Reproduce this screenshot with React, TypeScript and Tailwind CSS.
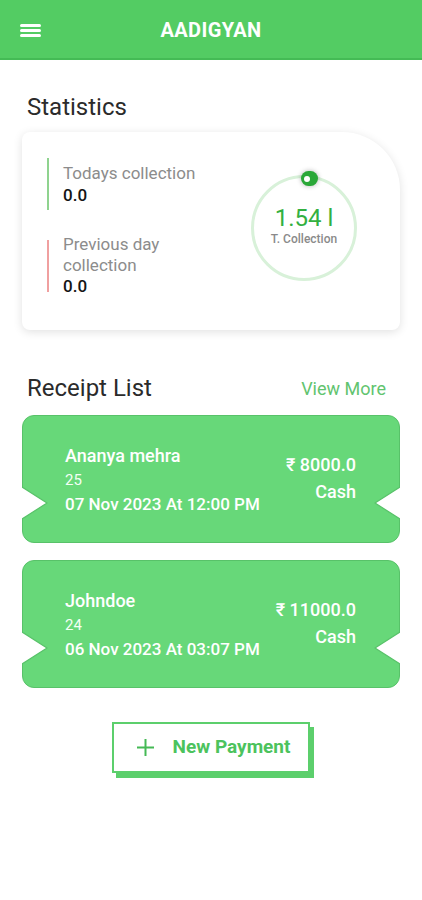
import React from "react";

interface Receipt {
  name: string;
  no: string;
  date: string;
  amount: string;
  mode: string;
}

const receipts: Receipt[] = [
  { name: "Ananya mehra", no: "25", date: "07 Nov 2023 At 12:00 PM", amount: "₹ 8000.0", mode: "Cash" },
  { name: "Johndoe", no: "24", date: "06 Nov 2023 At 03:07 PM", amount: "₹ 11000.0", mode: "Cash" },
];

const Notch = ({ side }: { side: "left" | "right" }) => (
  <svg
    width="26"
    height="32"
    viewBox="0 0 26 32"
    className={side === "left" ? "absolute left-[-1px] top-[71px]" : "absolute right-[-1px] top-[71px] rotate-180"}
  >
    <polygon points="0,0 25,16 0,32" fill="#ffffff" />
    <polyline points="0,0 25,16 0,32" fill="none" stroke="#58c269" strokeWidth="1.2" strokeLinejoin="round" />
  </svg>
);

const ReceiptCard = ({ r }: { r: Receipt }) => (
  <div className="relative h-[128px] rounded-[12px] bg-[#67d879] border border-[#58c269] flex items-center justify-between pl-[42px] pr-[43px]">
    <Notch side="left" />
    <Notch side="right" />
    <div className="text-white leading-[24px] mt-[2px]">
      <p className="text-[18px] font-medium">{r.name}</p>
      <p className="text-[15px] text-[#f4fff5]">{r.no}</p>
      <p className="text-[17px] font-medium">{r.date}</p>
    </div>
    <div className="text-white text-right leading-[27px] text-[18px] font-medium mt-[-2px]">
      <p>{r.amount}</p>
      <p>{r.mode}</p>
    </div>
  </div>
);

export default function App() {
  return (
    <div className="min-h-[900px] w-[422px] bg-white font-['Roboto','Liberation_Sans',sans-serif]">
      <header className="h-[60px] bg-[#53cc63] border-b-2 border-[#44bb55] relative flex items-center justify-center">
        <button className="absolute left-[20px] top-[24px] flex flex-col gap-[2.5px]">
          <span className="block w-[21px] h-[2.5px] bg-white rounded-sm" />
          <span className="block w-[21px] h-[2.5px] bg-white rounded-sm" />
          <span className="block w-[21px] h-[2.5px] bg-white rounded-sm" />
        </button>
        <h1 className="text-white text-[20px] font-bold tracking-[0.4px] mt-[2px]">AADIGYAN</h1>
      </header>

      <main className="px-[22px]">
        <h2 className="mt-[32px] pl-[5px] text-[24px] leading-[30px] text-[#2b2b2b]">Statistics</h2>

        <section className="mt-[10px] h-[198px] bg-white rounded-[8px] rounded-tr-[58px] shadow-[0_2px_10px_rgba(0,0,0,0.12)] flex pt-[26px] pl-[25px] pr-[43px]">
          <div className="flex-1 flex flex-col gap-[24px]">
            <div className="flex items-center gap-[14px]">
              <span className="w-[2px] h-[52px] bg-[#8fd38f]" />
              <div className="leading-[22px] text-[17px]">
                <p className="text-[#8c8c8c]">Todays collection</p>
                <p className="text-[#151515] font-medium">0.0</p>
              </div>
            </div>
            <div className="flex items-center gap-[14px]">
              <span className="w-[2px] h-[52px] bg-[#f0a0a0]" />
              <div className="leading-[21px] text-[17px]">
                <p className="text-[#8c8c8c]">Previous day</p>
                <p className="text-[#8c8c8c]">collection</p>
                <p className="text-[#151515] font-medium">0.0</p>
              </div>
            </div>
          </div>
          <div className="relative mt-[17px] w-[106px] h-[106px] rounded-full border-[3px] border-[#d8f1d9] flex flex-col items-center justify-center">
            <div className="absolute top-[-7px] left-[47px] w-[17px] h-[15px] rounded-full bg-[#2aa838] shadow-[0_0_5px_rgba(0,0,0,0.3)] flex items-center pl-[3px]">
              <span className="w-[6px] h-[6px] rounded-full bg-white" />
            </div>
            <p className="text-[24px] leading-[28px] text-[#33b041] mt-[-6px]">1.54 l</p>
            <p className="text-[12px] leading-[15px] text-[#8a8a8a] font-medium">T. Collection</p>
          </div>
        </section>

        <div className="mt-[43px] flex items-center justify-between pl-[5px] pr-[14px]">
          <h2 className="text-[24px] leading-[30px] text-[#2b2b2b]">Receipt List</h2>
          <a className="text-[18px] text-[#62c46f]">View More</a>
        </div>

        <div className="mt-[12px] flex flex-col gap-[17px]">
          {receipts.map((r) => (
            <ReceiptCard key={r.name} r={r} />
          ))}
        </div>

        <div className="mt-[34px] flex justify-center">
          <button className="w-[198px] h-[51px] border-2 border-[#5ccf6c] bg-white shadow-[4px_5px_0_#5ccf6c] flex items-center justify-center gap-[18px] pl-[4px] text-[#4cc35d]">
            <svg width="19" height="19" viewBox="0 0 19 19">
              <path d="M9.5 1v17M1 9.5h17" stroke="#45b955" strokeWidth="2" />
            </svg>
            <span className="text-[19px] font-bold">New Payment</span>
          </button>
        </div>
      </main>
    </div>
  );
}
